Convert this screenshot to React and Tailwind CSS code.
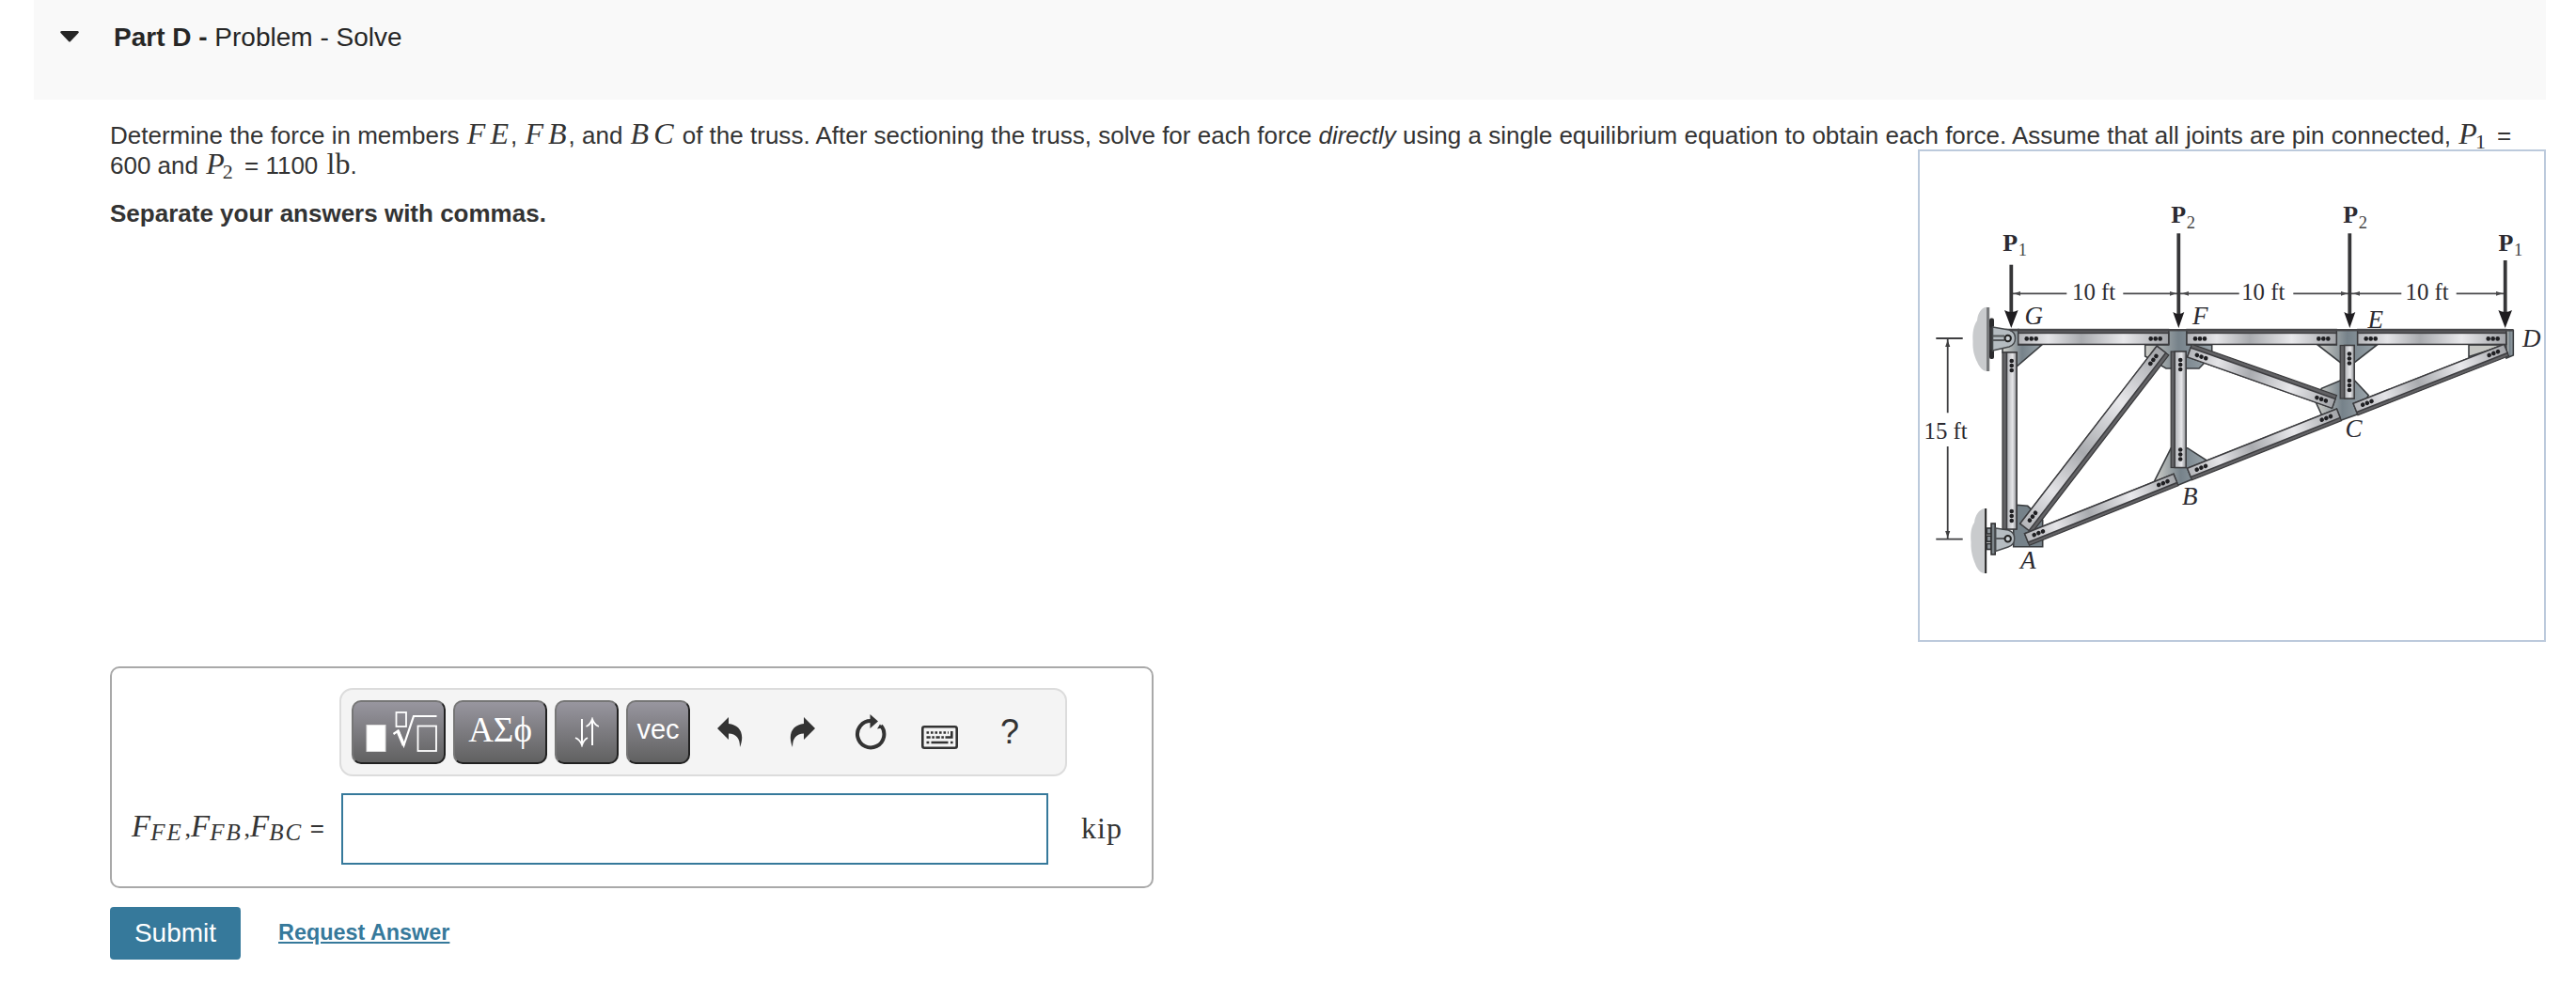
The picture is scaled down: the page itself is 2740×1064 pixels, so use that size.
const bolts = [0, 5, 10];

// Steel channel between two joints. `flip` puts the shaded flange on the upper side.
function Member({ x1, y1, x2, y2, width = 16, flange = 4, flip = false, fill = 'url(#steel)' }) {
  const length = Math.hypot(x2 - x1, y2 - y1);
  const angle = (Math.atan2(y2 - y1, x2 - x1) * 180) / Math.PI;
  const top = -width / 2;
  const webY = flip ? top + flange : top;
  const webHeight = width - flange;
  const boltY = webY + webHeight / 2;

  return (
    <g transform={`translate(${x1} ${y1}) rotate(${angle})`}>
      <rect x="0" y={top} width={length} height={width} fill="#626265" stroke="#39393b" strokeWidth="1.2" />
      <rect x="0" y={webY} width={length} height={webHeight} fill={fill} stroke="#3c3c3f" strokeWidth="1.5" />
      {bolts.map((b) => (
        <g key={b} fill="#1f1f22">
          <circle cx={9 + b} cy={boltY} r="2.3" />
          <circle cx={length - 9 - b} cy={boltY} r="2.3" />
        </g>
      ))}
    </g>
  );
}

function Load({ x, top, tip = 188, half = 6, head = 17, label, labelX, labelY }) {
  return (
    <g>
      <line x1={x} y1={top} x2={x} y2={tip - 10} stroke="#363638" strokeWidth="3.8" />
      <path d={`M${x - half} ${tip - head} Q${x} ${tip - head + 4} ${x + half} ${tip - head} L${x} ${tip} Z`} fill="#1f1d20" />
      <text x={labelX} y={labelY} fontSize="26" fontWeight="bold">P</text>
      <text x={labelX + 16.5} y={labelY + 5.7} fontSize="18.5" fill="#444">{label}</text>
    </g>
  );
}

function Span({ x1, x2, textStart, textEnd, label }) {
  const y = 151.3;
  return (
    <g stroke="#4a4a4c" strokeWidth="1.8">
      <line x1={x1} y1={y} x2={textStart} y2={y} />
      <line x1={textEnd} y1={y} x2={x2} y2={y} />
      <path d={`M${x1 + 2} ${y} l7 -2.4 v4.8 Z M${x2 - 2} ${y} l-7 -2.4 v4.8 Z`} fill="#4a4a4c" stroke="none" />
      <text x={label} y="158" fontSize="24.8" stroke="none">10 ft</text>
    </g>
  );
}

function Truss() {
  const gusset = { fill: 'url(#plate)', stroke: '#3a3d40', strokeWidth: 1.6 };

  return (
    <svg width="664" height="520" viewBox="0 0 664 520" className="block font-['Liberation_Serif',serif]" fill="#2b2a30">
      <defs>
        <linearGradient id="steel" x1="0" x2="1" y1="0" y2="0">
          <stop offset="0" stopColor="#b4b5b9" />
          <stop offset="0.2" stopColor="#e4e4e7" />
          <stop offset="0.42" stopColor="#a9abaf" />
          <stop offset="0.7" stopColor="#e8e8eb" />
          <stop offset="1" stopColor="#a2a4a8" />
        </linearGradient>
        <linearGradient id="column" x1="0" x2="0" y1="0" y2="1">
          <stop offset="0" stopColor="#8c8e92" />
          <stop offset="0.4" stopColor="#e6e6e9" />
          <stop offset="1" stopColor="#b0b2b6" />
        </linearGradient>
        <linearGradient id="plate" x1="0" x2="1" y1="0" y2="0">
          <stop offset="0" stopColor="#cfcfca" />
          <stop offset="0.5" stopColor="#76828a" />
          <stop offset="1" stopColor="#9aa4aa" />
        </linearGradient>
      </defs>

      {/* wall supports */}
      <path d="M71.5 165.7 C66 166 62 171 61 180 C57 186 56 193 56.5 202 C56 211 58 218 61 224 C64 231 68 234 71.5 234 Z" fill="#c9cbcd" />
      <rect x="71" y="166" width="3.2" height="68" fill="#77797b" />
      <rect x="74" y="180" width="3.6" height="39" fill="#37373a" />
      <rect x="74" y="177.5" width="5" height="10" rx="2" fill="#2b2b2d" />
      <rect x="74" y="211" width="5" height="10" rx="2" fill="#2b2b2d" />
      <path d="M69 380 C63 381 59 387 58 395 C54 401 54 408 54.5 416 C54 426 57 434 59 439 C61 445 65 449 69 449 Z" fill="#c9cbcd" />
      <rect x="69" y="380" width="2.2" height="69" fill="#333" />
      {[401, 409.2, 417.5].map((y) => (
        <rect key={y} x="71.2" y={y} width="5" height="6" fill="#8b9297" stroke="#2f3133" strokeWidth="1.6" />
      ))}
      <rect x="76" y="396" width="4.2" height="33" fill="#7d858a" stroke="#2b2b2d" strokeWidth="1.5" />

      {/* gusset plates */}
      <path d="M92 189.5 H105 V206 H129.7 L103 229 V214 H88 V206 Z" {...gusset} />
      <path d="M264.7 190 H284 V206 H310.7 V217 L297 231 H262 L239.7 218 V206 H264.7 Z" {...gusset} />
      <path d="M443.3 190 H465.7 V206 H486.3 L462.7 224.5 H447 L423.3 206 H443.3 Z" {...gusset} />
      <path d="M584 206 V218.5 L623 206 Z" fill="#c6c7c3" stroke="#3a3d40" strokeWidth="1.6" />
      <path d="M447 244 H462.7 L477.3 259.7 L465 280 L448.7 286 L427.3 280 L421.3 267 L427.3 252.3 Z" {...gusset} />
      <path d="M267.3 315.7 L249.7 350.7 L275.3 355 L289.7 349 L305.3 329 L284.7 315.7 Z" {...gusset} />
      <path d="M103 376.3 L114.7 377.3 L130.7 392.3 V420.7 H99.7 V401 H103 Z" fill="#76828a" stroke="#3a3d40" strokeWidth="1.6" />

      {/* pin brackets */}
      <path d="M77.5 187 L95 190 Q101.5 192 101.5 199 Q101.5 206 95 208 L77.5 212 Z" fill="#b5bcc1" stroke="#46494c" strokeWidth="1.5" />
      <path d="M80.7 401 L94 403 Q100.7 405 100.7 412 Q100.7 419 94 421 L80.7 425.5 Z" fill="#b5bcc1" stroke="#46494c" strokeWidth="1.5" />
      <path d="M78 196.5 H90 M78 201 H90 M81 412 H90" stroke="#55585b" strokeWidth="2" />
      <circle cx="93.7" cy="199" r="3.2" fill="#c9cfd3" stroke="#222" strokeWidth="2" />
      <circle cx="93.7" cy="412.3" r="3.2" fill="#c9cfd3" stroke="#222" strokeWidth="2" />

      {/* members */}
      <Member x1={95.5} y1={214} x2={95.5} y2={402} width={15} flange={4.5} fill="url(#column)" />
      <Member x1={275.2} y1={213} x2={275.2} y2={336.5} width={16} fill="url(#column)" />
      <Member x1={113} y1={401} x2={258.5} y2={212} width={16} />
      <Member x1={114} y1={413} x2={272.5} y2={349.5} width={13.5} flange={3.5} />
      <Member x1={287} y1={343.5} x2={446} y2={280.3} width={13.5} flange={3.5} />
      <path d="M623.7 190.5 H631.3 V217 L624 220 Z" {...gusset} />
      <Member x1={463.5} y1={274.5} x2={624} y2={211.5} width={13.5} flange={3.5} />
      <Member x1={287} y1={212} x2={441} y2={266.5} width={14.5} flip />
      <Member x1={454.7} y1={206.5} x2={454.7} y2={263} width={15} flange={4.5} fill="url(#column)" />
      <Member x1={104.7} y1={197.4} x2={264.7} y2={197.4} flip />
      <Member x1={284} y1={197.4} x2={443.3} y2={197.4} flip />
      <Member x1={465.7} y1={197.4} x2={623.7} y2={197.4} flip />
      <rect x="96" y="189" width="535.5" height="2.4" fill="#47474a" />

      {/* dimensions */}
      <Span x1={98} x2={275} textStart={156.3} textEnd={216.3} label={162} />
      <Span x1={277} x2={457} textStart={339.7} textEnd={397.3} label={342.2} />
      <Span x1={459} x2={622} textStart={512.3} textEnd={570.7} label={516.5} />
      <g stroke="#3f3f41" strokeWidth="1.8">
        <path d="M17.3 199 H45.7 M17.3 412.7 H45.7 M29.7 199 V278.3 M29.7 314 V412.7" />
        <path d="M29.7 201 l-2.6 7 h5.2 Z M29.7 411 l-2.6 -7 h5.2 Z" fill="#3f3f41" stroke="none" />
      </g>
      <text x="4.5" y="305.7" fontSize="24.8">15 ft</text>

      <Load x={97.3} top={120.7} half={7.3} head={19} label="1" labelX={88.2} labelY={105.7} />
      <Load x={275.3} top={87.3} label="2" labelX={267.2} labelY={76.3} />
      <Load x={457.3} top={87.3} label="2" labelX={450.2} labelY={76.3} />
      <Load x={622.7} top={116} half={7.3} head={19} label="1" labelX={615.5} labelY={105.7} />

      <g fontSize="27" fontStyle="italic">
        <text x="111.5" y="183.7">G</text>
        <text x="290" y="183.7">F</text>
        <text x="476.5" y="188.3">E</text>
        <text x="641" y="207.7">D</text>
        <text x="452.5" y="303.7">C</text>
        <text x="279" y="375.7">B</text>
        <text x="107" y="444">A</text>
      </g>
    </svg>
  );
}

function MathVar({ children }) {
  return (
    <span className="-mr-[3px] ml-[1px] font-['Liberation_Serif',serif] text-[32px] leading-none tracking-[5px] italic">{children}</span>
  );
}

// P with a numeric subscript
function Force({ index }) {
  return (
    <span className="mr-[5px] ml-[1px] font-['Liberation_Serif',serif] leading-none">
      <span className="text-[32px] leading-none italic">P</span>
      <span className="relative top-[5px] -ml-[2px] text-[22px] leading-none">{index}</span>
    </span>
  );
}

function ForceVar({ sub }) {
  return (
    <span className="inline-block w-[56.5px]">
      <span className="text-[33px]">F</span>
      <span className="relative top-1 text-[25px] tracking-[2px]">{sub}</span>
    </span>
  );
}

function ToolButton({ className, children }) {
  return (
    <button
      className={`flex h-[68px] items-center justify-center rounded-[10px] border-2 border-t-[#767676] border-r-[#212121] border-b-[#212121] border-l-[#767676] bg-linear-to-b from-[#98969f] to-[#616161] text-white ${className}`}
    >
      {children}
    </button>
  );
}

function Toolbar() {
  return (
    <div className="flex h-[94px] w-[774px] items-center gap-2 rounded-[14px] border-2 border-[#dcdcdc] bg-[#f4f4f4] pl-[11px]">
      <ToolButton className="w-[100px]">
        <svg width="96" height="64" viewBox="0 0 96 64" fill="none" stroke="#fff">
          <rect x="14" y="24.5" width="20" height="28" fill="#fff" stroke="#ddd" />
          <rect x="45.5" y="11" width="10.5" height="15" strokeWidth="1.8" />
          <path d="M42.5 34 L47.5 30.5 L53.5 46 L64 15 H88.5" strokeWidth="2.2" />
          <path d="M47 30.5 L53.5 46" strokeWidth="3.5" />
          <rect x="68.5" y="25.5" width="19.5" height="26.5" strokeWidth="1.8" />
        </svg>
      </ToolButton>
      <ToolButton className="w-[100px] pb-[5px] font-['Liberation_Serif',serif] text-[37px]">ΑΣϕ</ToolButton>
      <ToolButton className="w-[68px]">
        <svg width="26" height="32" viewBox="0 0 26 32" fill="none" stroke="#fff" strokeWidth="2">
          <path d="M8 2 V29 M19 30 V3" />
          <path d="M1 22 Q6 24 8 30 Q10 24 14 22 M12.5 10 Q17 8 19 2 Q21 8 26 10" strokeWidth="1.8" />
        </svg>
      </ToolButton>
      <ToolButton className="w-[68px] pb-[5px] text-[29px]">vec</ToolButton>
      <div className="flex items-center pl-[21px] text-[#333]">
        <svg width="28" height="32" viewBox="0 0 28 32" fill="currentColor">
          <path d="M0 12 L12 0 V7 C23 8 30 17 24 32 C24 22 20 18 12 17.5 V24 Z" />
        </svg>
        <svg width="28" height="32" viewBox="0 0 28 32" fill="currentColor" className="ml-[48px]">
          <path d="M28 12 L16 0 V7 C5 8 -2 17 4 32 C4 22 8 18 16 17.5 V24 Z" />
        </svg>
        <svg width="34" height="38" viewBox="0 0 34 38" fill="none" className="ml-[42px]">
          <path d="M17.5 7 A14.2 14.2 0 1 0 28 12" stroke="currentColor" strokeWidth="4" />
          <path d="M16.5 0 L25 7.5 L16.5 15 Z M27 10.5 l3 4 l-6 1 Z" fill="currentColor" />
        </svg>
        <svg width="39" height="25" viewBox="0 0 39 25" fill="none" stroke="currentColor" strokeWidth="2.6" className="mt-[10px] ml-[37px]">
          <rect x="1.3" y="1.3" width="36.4" height="22.4" rx="2" />
          <path d="M5.5 7.5 H29" strokeDasharray="2.6 1.9" />
          <path d="M5.5 12.5 H27" strokeDasharray="4.2 1.6 2.6 1.6" />
          <path d="M32.3 6 V12.5 H27" />
          <path d="M5.5 18 h2.8 M10.5 18 H28.5 M31 18 h2.6" />
        </svg>
        <span className="ml-[45px] text-[36px] leading-none">?</span>
      </div>
    </div>
  );
}

export default function App() {
  return (
    <main className="h-[1064px] w-[2740px] overflow-hidden bg-white pr-8 pl-9 font-['Liberation_Sans',Arial,sans-serif] text-[#333]">
      <header className="flex h-[106px] bg-[#f9f9f9] pt-6 pl-7 text-[#262626]">
        <svg width="20" height="12" viewBox="0 0 20 12" className="mt-[9px]">
          <path d="M1.5 0 H18.5 Q20.5 0.5 19.5 2 L11 11 Q10 12 9 11 L0.5 2 Q-0.5 0.5 1.5 0 Z" fill="currentColor" />
        </svg>
        <h1 className="ml-[37px] text-[28px] leading-8"><b>Part D -</b> Problem - Solve</h1>
      </header>

      <section className="pl-[81px] text-[26px]">
        <p className="h-[53px] pt-[20px] text-[26.03px] leading-[32px] whitespace-nowrap">
          Determine the force in members <MathVar>FE</MathVar>, <MathVar>FB</MathVar>, and <MathVar>BC</MathVar> of the truss.
          After sectioning the truss, solve for each force <i>directly</i> using a single equilibrium equation to obtain each
          force. Assume that all joints are pin connected, <Force index="1" /> =
        </p>

        <div className="flex justify-between">
          <div>
            <p className="-mt-px h-[53px] leading-[32px]">
              600 and <Force index="2" /> = 1100 <span className="ml-[2px] font-['Liberation_Serif',serif] text-[32px] leading-none">lb</span>.
            </p>
            <p className="leading-[32px] font-bold">Separate your answers with commas.</p>

            <div className="mt-[466px] h-[236px] w-[1110px] rounded-[10px] border-2 border-[#a9a9a9] pt-[21px]">
              <div className="pl-[242px]">
                <Toolbar />
              </div>
              <div className="mt-[18px] flex items-center">
                <div className="w-[244px] pb-1 pl-[21px] font-['Liberation_Serif',serif] whitespace-nowrap italic">
                  <ForceVar sub="FE" />
                  <span className="not-italic">,</span>
                  <ForceVar sub="FB" />
                  <span className="not-italic">,</span>
                  <ForceVar sub="BC" />
                  <span className="font-['Liberation_Sans',sans-serif] not-italic"> =</span>
                </div>
                <input className="h-[76px] w-[752px] border-2 border-[#36799b] bg-white outline-none" />
                <span className="ml-[35px] pb-[3px] font-['Liberation_Serif',serif] text-[32px] tracking-[1px]">kip</span>
              </div>
            </div>

            <div className="mt-5 flex items-center">
              <button className="h-14 w-[139px] rounded bg-[#36799b] text-[28px] text-white">Submit</button>
              <a href="#" className="ml-10 pb-px text-[23.4px] font-bold text-[#36799b] underline decoration-2 underline-offset-2">Request Answer</a>
            </div>
          </div>

          <figure className="h-[524px] w-[668px] border-2 border-[#bccadc]">
            <Truss />
          </figure>
        </div>
      </section>
    </main>
  );
}
